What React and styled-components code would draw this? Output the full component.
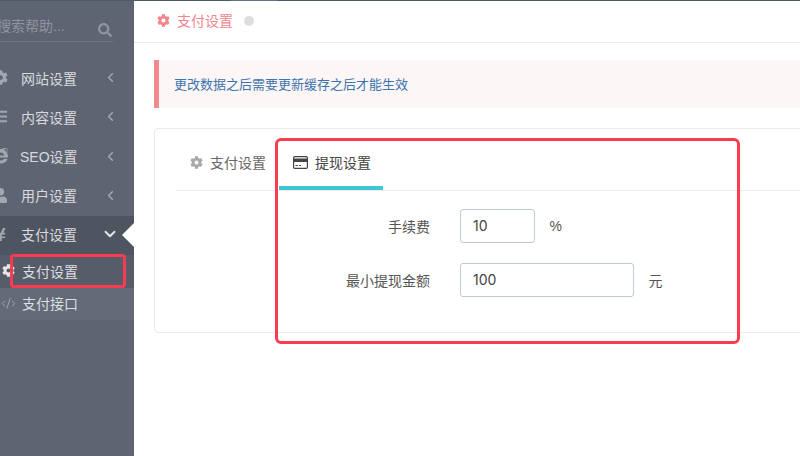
import styled, { createGlobalStyle } from "styled-components";
import {
  FaBars,
  FaCog,
  FaInternetExplorer,
  FaSearch,
  FaUser,
  FaYenSign,
} from "react-icons/fa";
import { ChevronDown, ChevronLeft, CodeXml } from "lucide-react";

const GlobalStyle = createGlobalStyle`
  html, body {
    margin: 0;
    padding: 0;
    background: #fff;
    overflow: hidden;
  }
  body {
    font-family: "Liberation Sans", "Noto Sans CJK SC", sans-serif;
  }
`;

const Page = styled.div`
  position: relative;
  display: flex;
  width: 800px;
  height: 456px;
  overflow: hidden;
`;

const TopStrip = styled.div`
  position: absolute;
  left: 0;
  top: 0;
  width: 800px;
  height: 1px;
  background: linear-gradient(
    to right,
    #4d5a66 231px,
    #667288 231px,
    #667288 277px,
    #4d5a66 277px
  );
`;

const Sidebar = styled.aside`
  position: relative;
  flex: 0 0 134px;
  height: 456px;
  background: #5f6472;
  overflow: hidden;
`;

const SearchBar = styled.div`
  display: flex;
  justify-content: space-between;
  box-sizing: border-box;
  width: 116px;
  height: 42px;
  margin: 0 0 17px -3px;
  padding: 16px 1px 0 0;
  border-bottom: 1px solid #70757f;
  color: #8f94a0;
  font-size: 14px;
  line-height: 20px;
  white-space: nowrap;

  svg {
    margin-top: 7px;
    font-size: 14px;
  }
`;

const MenuRow = styled.div`
  display: flex;
  align-items: center;
  box-sizing: border-box;
  height: ${(p) => (p.$active ? "39px" : "39.25px")};
  padding-bottom: ${(p) => (p.$active ? "3px" : "2px")};
  color: #d8dadf;
  font-size: 14px;
  background: ${(p) => (p.$active ? "#4f5560" : "transparent")};
`;

const MenuIcon = styled.span`
  display: flex;
  justify-content: center;
  flex: 0 0 16px;
  margin: 0 13px 0 -8px;
  color: #a3a7b0;
  font-size: ${(p) => p.$size || 15}px;
`;

const MenuLabel = styled.span`
  flex: 1;
  margin-left: ${(p) => p.$shift || 0}px;
`;

const MenuArrow = styled.span`
  display: flex;
  justify-content: center;
  width: 18px;
  margin-right: 15px;
  color: ${(p) => (p.$open ? "#e4e6ea" : "#a3a7b0")};
`;

const SubRow = styled.div`
  display: flex;
  align-items: center;
  box-sizing: border-box;
  height: ${(p) => p.$h}px;
  padding-bottom: 2px;
  color: #dcdee2;
  font-size: 14px;
  background: ${(p) => p.$bg};
`;

const SubIcon = styled.span`
  display: flex;
  justify-content: center;
  flex: 0 0 16px;
  margin-right: 6px;
  color: ${(p) => p.$color};
  font-size: 13px;
`;

const ActivePointer = styled.span`
  position: absolute;
  right: 0;
  top: 223px;
  width: 0;
  height: 0;
  border-top: 12px solid transparent;
  border-bottom: 12px solid transparent;
  border-right: 12px solid #fff;
`;

const Main = styled.main`
  flex: 1;
  min-width: 0;
  background: #fff;
`;

const TopBar = styled.header`
  display: flex;
  align-items: center;
  box-sizing: border-box;
  height: 43px;
  padding: 0 0 2px 23px;
  border-bottom: 1px solid #e9ebee;
  color: #f2868f;
  font-size: 14px;
`;

const TopIcon = styled(FaCog)`
  margin: 1px 7px 0 0;
  font-size: 13px;
`;

const StatusDot = styled.span`
  width: 10px;
  height: 10px;
  margin: 2px 0 0 11px;
  border-radius: 50%;
  background: #dedede;
`;

const Alert = styled.div`
  display: flex;
  align-items: center;
  box-sizing: border-box;
  height: 48px;
  margin: 17px 0 20px 20px;
  padding: 0 0 2px 15px;
  border-left: 5px solid #f2898f;
  background: #fcf6f6;
  color: #3c74ad;
  font-size: 13px;
`;

const Card = styled.section`
  box-sizing: border-box;
  width: 680px;
  height: 205px;
  margin-left: 20px;
  border: 1px solid #e7ebf0;
  border-radius: 4px;
`;

const Tabs = styled.div`
  display: flex;
  height: 61px;
  margin-left: 21px;
  border-bottom: 1px solid #e9ecef;
`;

const Tab = styled.div`
  display: flex;
  align-items: center;
  box-sizing: border-box;
  width: ${(p) => p.$w}px;
  height: 61px;
  padding: 9px 0 0 ${(p) => p.$pad}px;
  border-bottom: 4px solid ${(p) => (p.$active ? "#41c7d4" : "transparent")};
  color: ${(p) => (p.$active ? "#444" : "#666")};
  font-size: 14px;
`;

const TabIcon = styled.span`
  display: flex;
  margin-right: ${(p) => p.$gap}px;
  color: ${(p) => p.$color};
  font-size: 13px;
`;

const Form = styled.div`
  display: flex;
  flex-direction: column;
  gap: 20px;
  padding-top: 18px;
`;

const FormRow = styled.div`
  display: flex;
  align-items: center;
  height: 34px;
  color: #555;
  font-size: 14px;
`;

const FieldLabel = styled.label`
  flex: 0 0 275px;
  padding-bottom: 1px;
  text-align: right;
`;

const Field = styled.div`
  display: flex;
  align-items: center;
  box-sizing: border-box;
  width: ${(p) => p.$w}px;
  height: 34px;
  margin-left: 30px;
  padding: 0 0 1px 12px;
  border: 1px solid #bfc9d9;
  border-radius: 3px;
  color: #444;
  font-family: Inter, "Liberation Sans", sans-serif;
  font-size: 14px;
`;

const Unit = styled.span`
  margin-left: 14.5px;
  padding-bottom: 1px;
`;

const Callout = styled.div`
  position: absolute;
  box-sizing: border-box;
  border: 3px solid #fb3c50;
  border-radius: ${(p) => p.$r}px;
`;

const SidebarCallout = styled(Callout)`
  left: 10px;
  top: 254px;
  width: 116px;
  height: 34px;
`;

const PanelCallout = styled(Callout)`
  left: 275px;
  top: 138px;
  width: 465px;
  height: 206px;
`;

const CardIcon = () => (
  <svg width="15" height="13" viewBox="0 0 15 13" fill="none">
    <rect x="0.6" y="0.6" width="13.8" height="11.8" rx="1.2" stroke="currentColor" strokeWidth="1.2" />
    <rect x="0.6" y="2.5" width="13.8" height="3.5" fill="currentColor" />
    <rect x="2.5" y="9" width="2.5" height="1" fill="currentColor" />
    <rect x="6" y="9" width="2" height="1" fill="currentColor" />
  </svg>
);

const menu = [
  { label: "网站设置", icon: <FaCog /> },
  { label: "内容设置", icon: <FaBars /> },
  { label: "SEO设置", icon: <FaInternetExplorer />, shift: -1, size: 16 },
  { label: "用户设置", icon: <FaUser /> },
];

export default function App() {
  return (
    <Page>
      <GlobalStyle />
      <Sidebar>
        <SearchBar>
          <span>搜索帮助...</span>
          <FaSearch />
        </SearchBar>
        {menu.map((item) => (
          <MenuRow key={item.label}>
            <MenuIcon $size={item.size}>{item.icon}</MenuIcon>
            <MenuLabel $shift={item.shift}>{item.label}</MenuLabel>
            <MenuArrow>
              <ChevronLeft size={15} strokeWidth={2.5} />
            </MenuArrow>
          </MenuRow>
        ))}
        <MenuRow $active>
          <MenuIcon>
            <FaYenSign />
          </MenuIcon>
          <MenuLabel>支付设置</MenuLabel>
          <MenuArrow $open>
            <ChevronDown size={18} strokeWidth={2.5} />
          </MenuArrow>
        </MenuRow>
        <SubRow $h={33} $bg="#565c68">
          <SubIcon $color="#e6e7ea">
            <FaCog />
          </SubIcon>
          支付设置
        </SubRow>
        <SubRow $h={32} $bg="#646a77">
          <SubIcon $color="#a3a7b0">
            <CodeXml size={15} strokeWidth={1.5} />
          </SubIcon>
          支付接口
        </SubRow>
        <ActivePointer />
      </Sidebar>
      <Main>
        <TopBar>
          <TopIcon />
          支付设置
          <StatusDot />
        </TopBar>
        <Alert>更改数据之后需要更新缓存之后才能生效</Alert>
        <Card>
          <Tabs>
            <Tab $w={103} $pad={14}>
              <TabIcon $gap={7} $color="#a8a8a8">
                <FaCog />
              </TabIcon>
              支付设置
            </Tab>
            <Tab $w={104} $pad={14} $active>
              <TabIcon $gap={7} $color="#444">
                <CardIcon />
              </TabIcon>
              提现设置
            </Tab>
          </Tabs>
          <Form>
            <FormRow>
              <FieldLabel>手续费</FieldLabel>
              <Field $w={75}>10</Field>
              <Unit>%</Unit>
            </FormRow>
            <FormRow>
              <FieldLabel>最小提现金额</FieldLabel>
              <Field $w={174}>100</Field>
              <Unit>元</Unit>
            </FormRow>
          </Form>
        </Card>
      </Main>
      <TopStrip />
      <SidebarCallout $r={4} />
      <PanelCallout $r={6} />
    </Page>
  );
}
